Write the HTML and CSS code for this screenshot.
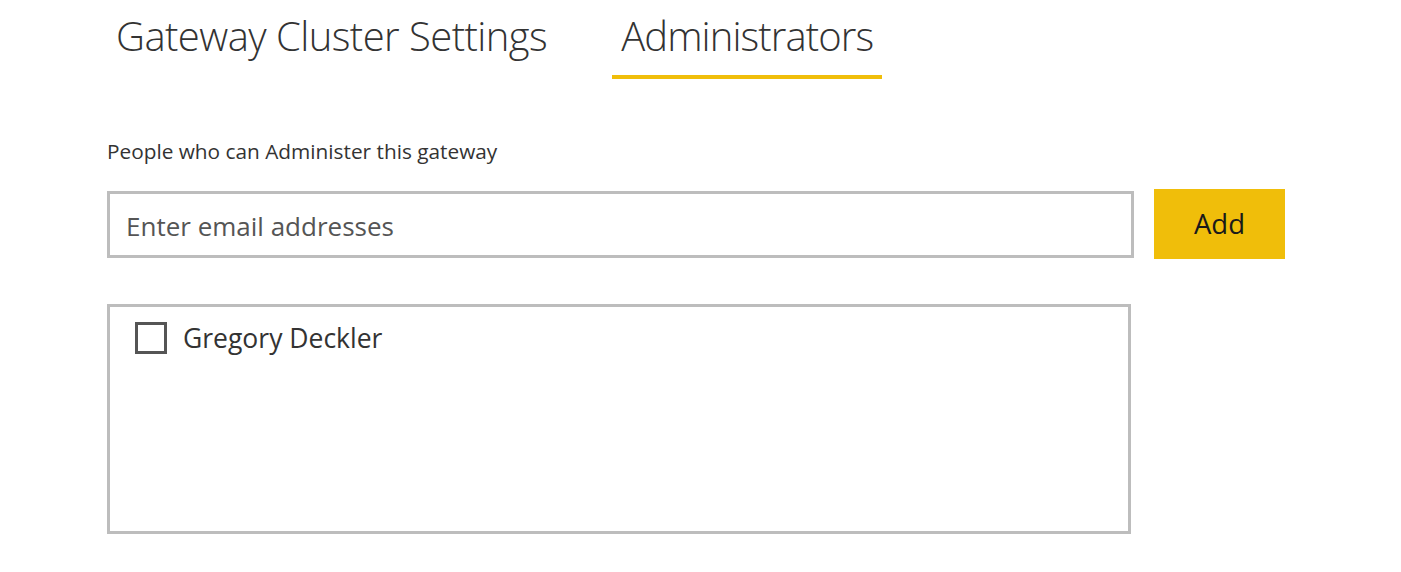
FILE: index.html
```html
<!DOCTYPE html>
<html>
<head>
<meta charset="utf-8">
<link rel="stylesheet" href="styles.css">
</head>
<body>
<div class="page">
  <nav class="tabs">
    <div class="tab first">Gateway Cluster Settings</div>
    <div class="tab active">Administrators</div>
  </nav>
  <div class="label">People who can Administer this gateway</div>
  <div class="add-row">
    <div class="input">Enter email addresses</div>
    <button class="add-btn">Add</button>
  </div>
  <div class="list">
    <div class="item">
      <span class="checkbox"></span>
      <span class="name">Gregory Deckler</span>
    </div>
  </div>
</div>
</body>
</html>
```
FILE: styles.css
```css
html, body {
  margin: 0;
  padding: 0;
  background: #ffffff;
}
body {
  font-family: "Open Sans", "Noto Sans", sans-serif;
  color: #333333;
}
.page {
  padding-left: 107px;
}
.tabs {
  display: flex;
  height: 79px;
}
.tab {
  font-size: 40px;
  font-weight: 300;
  color: #333333;
  padding: 6px 9px 0 9px;
  line-height: 60px;
  box-sizing: border-box;
}
.tab.first {
  letter-spacing: -0.55px;
  margin-right: 56px;
}
.tab.active {
  letter-spacing: -0.9px;
  border-bottom: 4px solid #f0be0a;
}
.label {
  margin-top: 58px;
  font-size: 20.8px;
  line-height: 28px;
  color: #333333;
}
.add-row {
  display: flex;
  align-items: center;
  gap: 20px;
  margin-top: 24px;
}
.input {
  width: 1027px;
  height: 67px;
  box-sizing: border-box;
  border: 3px solid #bdbdbd;
  padding-left: 16px;
  font-size: 26px;
  line-height: 65px;
  color: #555555;
}
.add-btn {
  width: 131px;
  height: 70px;
  border: none;
  background: #f0be0a;
  font-family: inherit;
  font-size: 27.5px;
  color: #1a1a1a;
  padding: 0;
  line-height: 70px;
}
.list {
  margin-top: 45px;
  width: 1024px;
  height: 230px;
  box-sizing: border-box;
  border: 3px solid #bdbdbd;
  padding: 13px 0 0 25px;
}
.item {
  display: flex;
  align-items: center;
  gap: 16px;
}
.checkbox {
  width: 32px;
  height: 32px;
  box-sizing: border-box;
  border: 3px solid #555555;
  display: inline-block;
}
.name {
  font-size: 26.5px;
  line-height: 36px;
  color: #333333;
}
```
